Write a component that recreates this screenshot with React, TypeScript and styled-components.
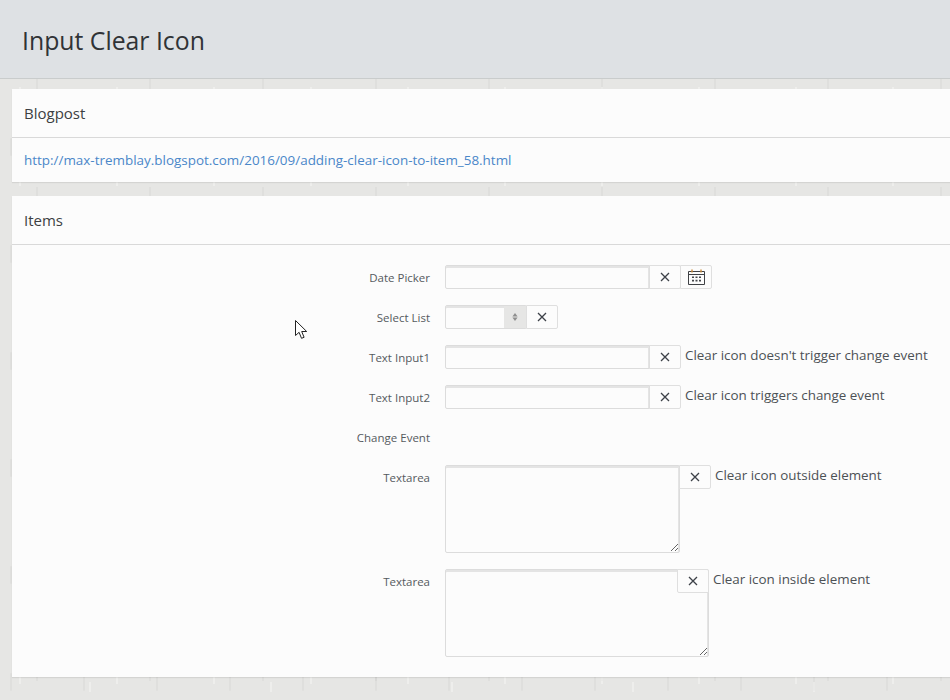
import React from 'react';
import styled, { createGlobalStyle } from 'styled-components';

const GlobalStyle = createGlobalStyle`
    html, body {
        margin: 0;
        padding: 0;
        height: 700px;
        overflow: hidden;
        background-color: #e6e6e4;
        background-image:
            radial-gradient(1px 9px at 20px 12px, rgba(255,255,255,.3) 98%, transparent),
            radial-gradient(1px 7px at 61px 30px, rgba(0,0,0,.04) 98%, transparent),
            radial-gradient(1.5px 12px at 37px 21px, rgba(0,0,0,.03) 98%, transparent),
            radial-gradient(1px 6px at 90px 8px, rgba(255,255,255,.3) 98%, transparent),
            radial-gradient(1px 10px at 11px 40px, rgba(0,0,0,.03) 98%, transparent);
        background-size: 97px 83px, 139px 71px, 113px 59px, 181px 97px, 73px 107px;
        font-family: "Open Sans", "Noto Sans", sans-serif;
    }
    * { box-sizing: border-box; }
`;

const Page = styled.div`
    position: relative;
    width: 950px;
    height: 700px;
    overflow: hidden;
`;

const TitleBar = styled.header`
    height: 79px;
    padding: 0 22px;
    display: flex;
    align-items: center;
    background: #dee1e4;
    border-bottom: 1px solid #c9cccc;
`;

const PageTitle = styled.h1`
    margin: 0 0 -1px;
    font-size: 24.8px;
    font-weight: 400;
    color: #303336;
`;

const Content = styled.main`
    width: 970px;
    padding: 10px 0 0 12px;
    display: flex;
    flex-direction: column;
    gap: 14px;
`;

const Panel = styled.section`
    background: #fcfcfc;
    box-shadow: 0 1px 1px rgba(0, 0, 0, .08);
`;

const PanelHead = styled.div`
    height: 49px;
    padding: 0 12px;
    display: flex;
    align-items: center;
    border-bottom: 1px solid #d9d9d9;
    font-size: 15px;
    color: #3c3f42;
`;

const LinkBody = styled.div`
    height: 44px;
    padding: 0 12px;
    display: flex;
    align-items: center;
`;

const BlogLink = styled.a`
    font-size: 13.45px;
    color: #4a87c9;
    text-decoration: none;
`;

const Form = styled.div`
    padding: 20px 0;
    display: flex;
    flex-direction: column;
    gap: 16px;
`;

const Row = styled.div`
    display: grid;
    grid-template-columns: 418px 1fr;
    column-gap: 15px;
    min-height: 24px;
`;

const Label = styled.label`
    height: 24px;
    display: flex;
    align-items: center;
    justify-content: flex-end;
    font-size: 11.5px;
    color: #555a5e;
`;

const Field = styled.div`
    display: flex;
    align-items: flex-start;
`;

const TextInput = styled.input<{ $width: number }>`
    width: ${props => props.$width}px;
    height: 24px;
    padding: 0 6px;
    background: #fcfcfc;
    border: 1px solid #dcdcdc;
    border-radius: 2px 0 0 2px;
    box-shadow: inset 0 2px 0 #e4e4e4, inset -1px 0 0 #e4e4e4;
    outline: none;
`;

const SelectBox = styled.div`
    width: 82px;
    height: 24px;
    display: flex;
    background: #fcfcfc;
    border: 1px solid #dcdcdc;
    border-radius: 2px;
    box-shadow: inset 0 2px 0 #e4e4e4;
`;

const SelectValue = styled.div`
    flex: 1;
`;

const SelectArrow = styled.div`
    width: 22px;
    display: flex;
    align-items: center;
    justify-content: center;
    background: #e6e6e5;
`;

const IconButton = styled.button`
    width: 32px;
    height: 24px;
    margin-left: -1px;
    padding: 0;
    display: flex;
    align-items: center;
    justify-content: center;
    background: #fcfcfc;
    border: 1px solid #dfdfdf;
    border-radius: 0 2px 2px 0;
    color: #3d4148;
`;

const OverlayButton = styled(IconButton)`
    position: absolute;
    top: 0;
    right: 0;
    margin: 0;
    border-radius: 0 2px 0 2px;
`;

const HelpText = styled.span`
    margin-left: 4px;
    line-height: 20px;
    font-size: 13.4px;
    color: #4c5155;
`;

const AreaWrap = styled.div`
    position: relative;
    display: flex;
`;

const TextArea = styled.textarea<{ $width: number }>`
    display: block;
    width: ${props => props.$width}px;
    height: 88px;
    margin: 0;
    padding: 6px;
    background: #fcfcfc;
    border: 1px solid #dcdcdc;
    border-radius: 2px;
    box-shadow: inset 0 2px 0 #e4e4e4, inset -1px 0 0 #e4e4e4;
    outline: none;
`;

const Pointer = styled.svg`
    position: absolute;
    left: 295px;
    top: 320px;
`;

const ClearIcon = () => (
    <svg width="10" height="10" viewBox="0 0 10 10" fill="none" stroke="currentColor" strokeWidth="1.3">
        <path d="M1 1l8 8M9 1l-8 8" />
    </svg>
);

const CalendarIcon = () => (
    <svg width="17" height="16" viewBox="0 0 17 16" fill="none">
        <path d="M.5 2.5h16v13H.5z" stroke="#3f4145" />
        <path d="M1 5.5h15" stroke="#3f4145" />
        <path d="M4 .5v3M13 .5v3" stroke="#c98a3a" strokeWidth="1.4" />
        <path d="M4 7.5h2v1.6H4zM7.5 7.5h2v1.6h-2zM11 7.5h2v1.6h-2zM4 10.8h2v1.6H4zM7.5 10.8h2v1.6h-2zM11 10.8h2v1.6h-2z" fill="#45474b" />
    </svg>
);

const SortIcon = () => (
    <svg width="6" height="8" viewBox="0 0 6 8" fill="#8f8f8f">
        <path d="M3 0l2.6 3.4H.4zM3 8L.4 4.6h5.2z" />
    </svg>
);

const App = () => (
    <Page>
        <GlobalStyle />
        <TitleBar>
            <PageTitle>Input Clear Icon</PageTitle>
        </TitleBar>
        <Content>
            <Panel>
                <PanelHead>Blogpost</PanelHead>
                <LinkBody>
                    <BlogLink href="#">http://max-tremblay.blogspot.com/2016/09/adding-clear-icon-to-item_58.html</BlogLink>
                </LinkBody>
            </Panel>
            <Panel>
                <PanelHead>Items</PanelHead>
                <Form>
                    <Row>
                        <Label>Date Picker</Label>
                        <Field>
                            <TextInput $width={205} />
                            <IconButton><ClearIcon /></IconButton>
                            <IconButton><CalendarIcon /></IconButton>
                        </Field>
                    </Row>
                    <Row>
                        <Label>Select List</Label>
                        <Field>
                            <SelectBox>
                                <SelectValue />
                                <SelectArrow><SortIcon /></SelectArrow>
                            </SelectBox>
                            <IconButton><ClearIcon /></IconButton>
                        </Field>
                    </Row>
                    <Row>
                        <Label>Text Input1</Label>
                        <Field>
                            <TextInput $width={205} />
                            <IconButton><ClearIcon /></IconButton>
                            <HelpText>Clear icon doesn't trigger change event</HelpText>
                        </Field>
                    </Row>
                    <Row>
                        <Label>Text Input2</Label>
                        <Field>
                            <TextInput $width={205} />
                            <IconButton><ClearIcon /></IconButton>
                            <HelpText>Clear icon triggers change event</HelpText>
                        </Field>
                    </Row>
                    <Row>
                        <Label>Change Event</Label>
                    </Row>
                    <Row>
                        <Label>Textarea</Label>
                        <Field>
                            <TextArea $width={235} />
                            <IconButton><ClearIcon /></IconButton>
                            <HelpText>Clear icon outside element</HelpText>
                        </Field>
                    </Row>
                    <Row>
                        <Label>Textarea</Label>
                        <Field>
                            <AreaWrap>
                                <TextArea $width={264} />
                                <OverlayButton><ClearIcon /></OverlayButton>
                            </AreaWrap>
                            <HelpText>Clear icon inside element</HelpText>
                        </Field>
                    </Row>
                </Form>
            </Panel>
        </Content>
        <Pointer width="13" height="20" viewBox="0 0 13 20">
            <path d="M.5.5v15l3.6-3.2 2.4 6 2.6-1-2.4-5.8h5z" fill="#fff" stroke="#222" />
        </Pointer>
    </Page>
);

export default App;
